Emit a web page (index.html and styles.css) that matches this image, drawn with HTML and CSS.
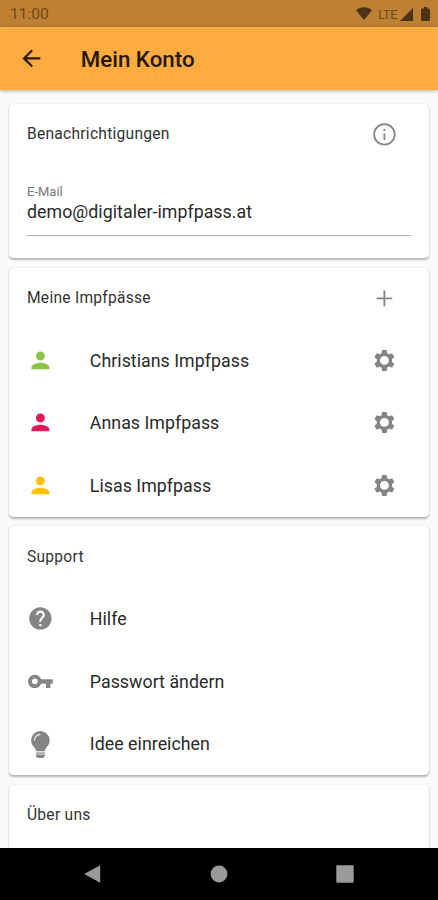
FILE: index.html
```html
<!DOCTYPE html>
<html lang="de">
<head>
<meta charset="utf-8">
<meta name="viewport" content="width=device-width, initial-scale=1">
<title>Mein Konto</title>
<link rel="stylesheet" href="styles.css">
</head>
<body>
<svg class="defs" width="0" height="0" aria-hidden="true">
  <symbol id="person" viewBox="0 0 24 24"><path d="M12 12c2.210 0 4-1.790 4-4s-1.790-4-4-4-4 1.790-4 4 1.790 4 4 4zm0 2c-2.670 0-8 1.340-8 4v2h16v-2c0-2.660-5.330-4-8-4z"/></symbol>
  <symbol id="gear" viewBox="0 0 24 24"><path fill-rule="evenodd" d="M10 2.600h4l.5 2.900 1.700 1 2.700-1 2 3.500-2.100 1.900v2.200l2.100 1.900-2 3.500-2.700-1-1.700 1-.5 2.900h-4l-.5-2.900-1.700-1-2.700 1-2-3.500 2.100-1.900v-2.200L3.100 9l2-3.500 2.700 1 1.700-1zM12 8a4 4 0 1 0 0 8 4 4 0 0 0 0-8z"/></symbol>
</svg>
<div class="statusbar">
  <span class="clock">11:00</span>
  <svg class="wifi" viewBox="0 0 16 14"><path d="M0 3.200C4.500-.8 11.500-.8 16 3.200L8 13z"/></svg>
  <span class="lte">LTE</span>
  <svg class="signal" viewBox="0 0 13 13"><path d="M13 0v13H0z"/></svg>
  <svg class="battery" viewBox="0 0 9 14"><path d="M2.700 0h3.600v1.500H8a1 1 0 0 1 1 1V13a1 1 0 0 1-1 1H1a1 1 0 0 1-1-1V2.500a1 1 0 0 1 1-1h1.700z"/></svg>
</div>
<header class="appbar">
  <svg class="icon back" viewBox="0 0 24 24"><path d="M20 11H7.830l5.590-5.590L12 4l-8 8 8 8 1.410-1.410L7.830 13H20z"/></svg>
  <h1>Mein Konto</h1>
</header>
<main>
  <section class="card contact">
    <div class="head"><h2>Benachrichtigungen</h2>
      <svg class="icon" viewBox="0 0 24 24"><path d="M11.200 17h1.600v-6h-1.600zm.8-15a10 10 0 1 0 0 20 10 10 0 0 0 0-20zm0 18.400a8.400 8.400 0 1 1 0-16.800 8.400 8.400 0 0 1 0 16.800zM11.200 9h1.600V7.200h-1.600z"/></svg></div>
    <div class="field"><label>E-Mail</label><div class="value">demo@digitaler-impfpass.at</div></div>
  </section>
  <section class="card">
    <div class="head"><h2>Meine Impfpässe</h2><svg class="icon" viewBox="0 0 24 24"><path d="M19 12.850h-6.150V19h-1.700v-6.150H5v-1.700h6.150V5h1.700v6.150H19z"/></svg></div>
    <div class="row"><svg class="icon green"><use href="#person"/></svg><span>Christians Impfpass</span><svg class="icon"><use href="#gear"/></svg></div>
    <div class="row"><svg class="icon pink"><use href="#person"/></svg><span>Annas Impfpass</span><svg class="icon"><use href="#gear"/></svg></div>
    <div class="row"><svg class="icon amber"><use href="#person"/></svg><span>Lisas Impfpass</span><svg class="icon"><use href="#gear"/></svg></div>
  </section>
  <section class="card">
    <div class="head"><h2>Support</h2></div>
    <div class="row"><svg class="icon" viewBox="0 0 24 24"><path d="M12 2C6.480 2 2 6.480 2 12s4.480 10 10 10 10-4.480 10-10S17.520 2 12 2zm1 17h-2v-2h2v2zm2.070-7.750-.9.920C13.450 12.900 13 13.500 13 15h-2v-.5c0-1.100.45-2.100 1.170-2.830l1.240-1.260c.37-.36.59-.86.59-1.410 0-1.100-.9-2-2-2s-2 .9-2 2H8c0-2.210 1.790-4 4-4s4 1.790 4 4c0 .88-.36 1.680-.93 2.250z"/></svg><span>Hilfe</span></div>
    <div class="row"><svg class="icon" viewBox="0 0 24 24"><path d="M12.650 10C11.830 7.670 9.610 6 7 6c-3.310 0-6 2.690-6 6s2.690 6 6 6c2.610 0 4.830-1.670 5.650-4H17v4h4v-4h2v-4H12.650zM7 14.500A2.500 2.500 0 1 1 7 9.500a2.500 2.500 0 0 1 0 5z"/></svg><span>Passwort ändern</span></div>
    <div class="row"><svg class="icon" viewBox="0 -1 24 24" overflow="visible"><path d="M12 0a8.300 8.300 0 0 0-8.300 8.300c0 3.500 2.300 5.300 3.500 7.200.5.800.7 1.500.8 2.200h8c.1-.7.3-1.400.8-2.200 1.200-1.900 3.500-3.700 3.500-7.200A8.300 8.300 0 0 0 12 0z"/><path class="base" d="M8 18.300h8v2.500H8z"/><path d="M8 21h8v1.200L14.500 24h-5L8 22.200z"/><path class="glint" d="M6.700 8A5.300 5.300 0 0 1 11.500 3"/></svg><span>Idee einreichen</span></div>
  </section>
  <section class="card about">
    <div class="head"><h2>Über uns</h2></div>
  </section>
</main>
<nav class="navbar">
  <svg viewBox="0 0 18 18"><path d="M.2 9 16.200.2v17.600z"/></svg>
  <svg viewBox="0 0 18 18"><circle cx="9" cy="9" r="8.400"/></svg>
  <svg viewBox="0 0 18 18"><rect x=".3" y=".3" width="17.400" height="17.400" rx="1"/></svg>
</nav>
</body>
</html>
```

FILE: styles.css
```css
* { box-sizing: border-box; }
body {
  margin: 0;
  height: 900px;
  overflow: hidden;
  display: flex;
  flex-direction: column;
  background: #fafafa;
  color: #2a2a2a;
  font-family: Roboto, "Liberation Sans", sans-serif;
}
.defs { position: absolute; }
svg { display: block; flex: none; }
h1, h2 { margin: 0; font-weight: 400; white-space: nowrap; }

.statusbar {
  flex: none;
  height: 27px;
  padding: 1px 8px 0 10px;
  display: flex;
  align-items: center;
  background: #be8033;
  color: #704819;
  font-size: 15.500px;
}
.clock { flex: 1; }
.statusbar svg { fill: #4d3315; }
.wifi { width: 16px; height: 14px; }
.lte { margin: 0 3px 0 6px; font-size: 12.500px; letter-spacing: -0.300px; }
.signal { width: 13px; height: 13px; }
.battery { width: 9px; height: 14px; margin-left: 8px; }

.appbar {
  flex: none;
  height: 63px;
  padding: 0 18px;
  display: flex;
  align-items: center;
  background: #ffab40;
  box-shadow: 0 1px 4px rgba(0, 0, 0, .3);
  z-index: 1;
}
.appbar h1 {
  margin-left: 36px;
  padding-top: 1px;
  font-size: 22.300px;
  font-weight: 500;
  color: #241808;
}
.icon { width: 26.800px; height: 26.800px; fill: #858585; }
.icon.back { fill: #2d1e0b; }
.icon.green { fill: #8bc34a; }
.icon.pink { fill: #e0185c; }
.icon.amber { fill: #ffc107; }
.icon .base { fill: #b8b8b8; }
.icon .glint { fill: none; stroke: #e8e8e8; stroke-width: 1.200; stroke-linecap: round; }

main {
  flex: 1;
  min-height: 0;
  overflow: hidden;
  padding: 13.800px 9px 0;
  display: flex;
  flex-direction: column;
  gap: 9.800px;
}
.card {
  flex: none;
  background: #fff;
  border-radius: 4.500px;
  box-shadow: 0 1.500px 2px rgba(0, 0, 0, .27), 0 0 1.500px rgba(0, 0, 0, .12);
}
.contact { height: 154.300px; }
.about { height: 120px; }
.head {
  height: 61.200px;
  padding: 0 31.500px 0 18px;
  display: flex;
  align-items: center;
  justify-content: space-between;
}
.head h2 { font-size: 15.600px; letter-spacing: .25px; color: #333; }
.row {
  height: 62.500px;
  padding: 0 31.500px 0 18px;
  display: flex;
  align-items: center;
}
.row span {
  flex: 1;
  margin-left: 36px;
  font-size: 17.800px;
  letter-spacing: .03px;
}
.field {
  height: 71px;
  margin: 0 18px;
  padding-top: 19px;
  border-bottom: 1.500px solid #aaa;
}
.field label { display: block; font-size: 13px; line-height: 15px; color: #777; }
.value { margin-top: 1px; font-size: 17.800px; line-height: 24px; letter-spacing: .03px; }

.navbar {
  flex: none;
  height: 52px;
  padding: 0 84px;
  display: flex;
  align-items: center;
  justify-content: space-between;
  background: #000;
}
.navbar svg { width: 18px; height: 18px; fill: #9a9a9a; }
```
